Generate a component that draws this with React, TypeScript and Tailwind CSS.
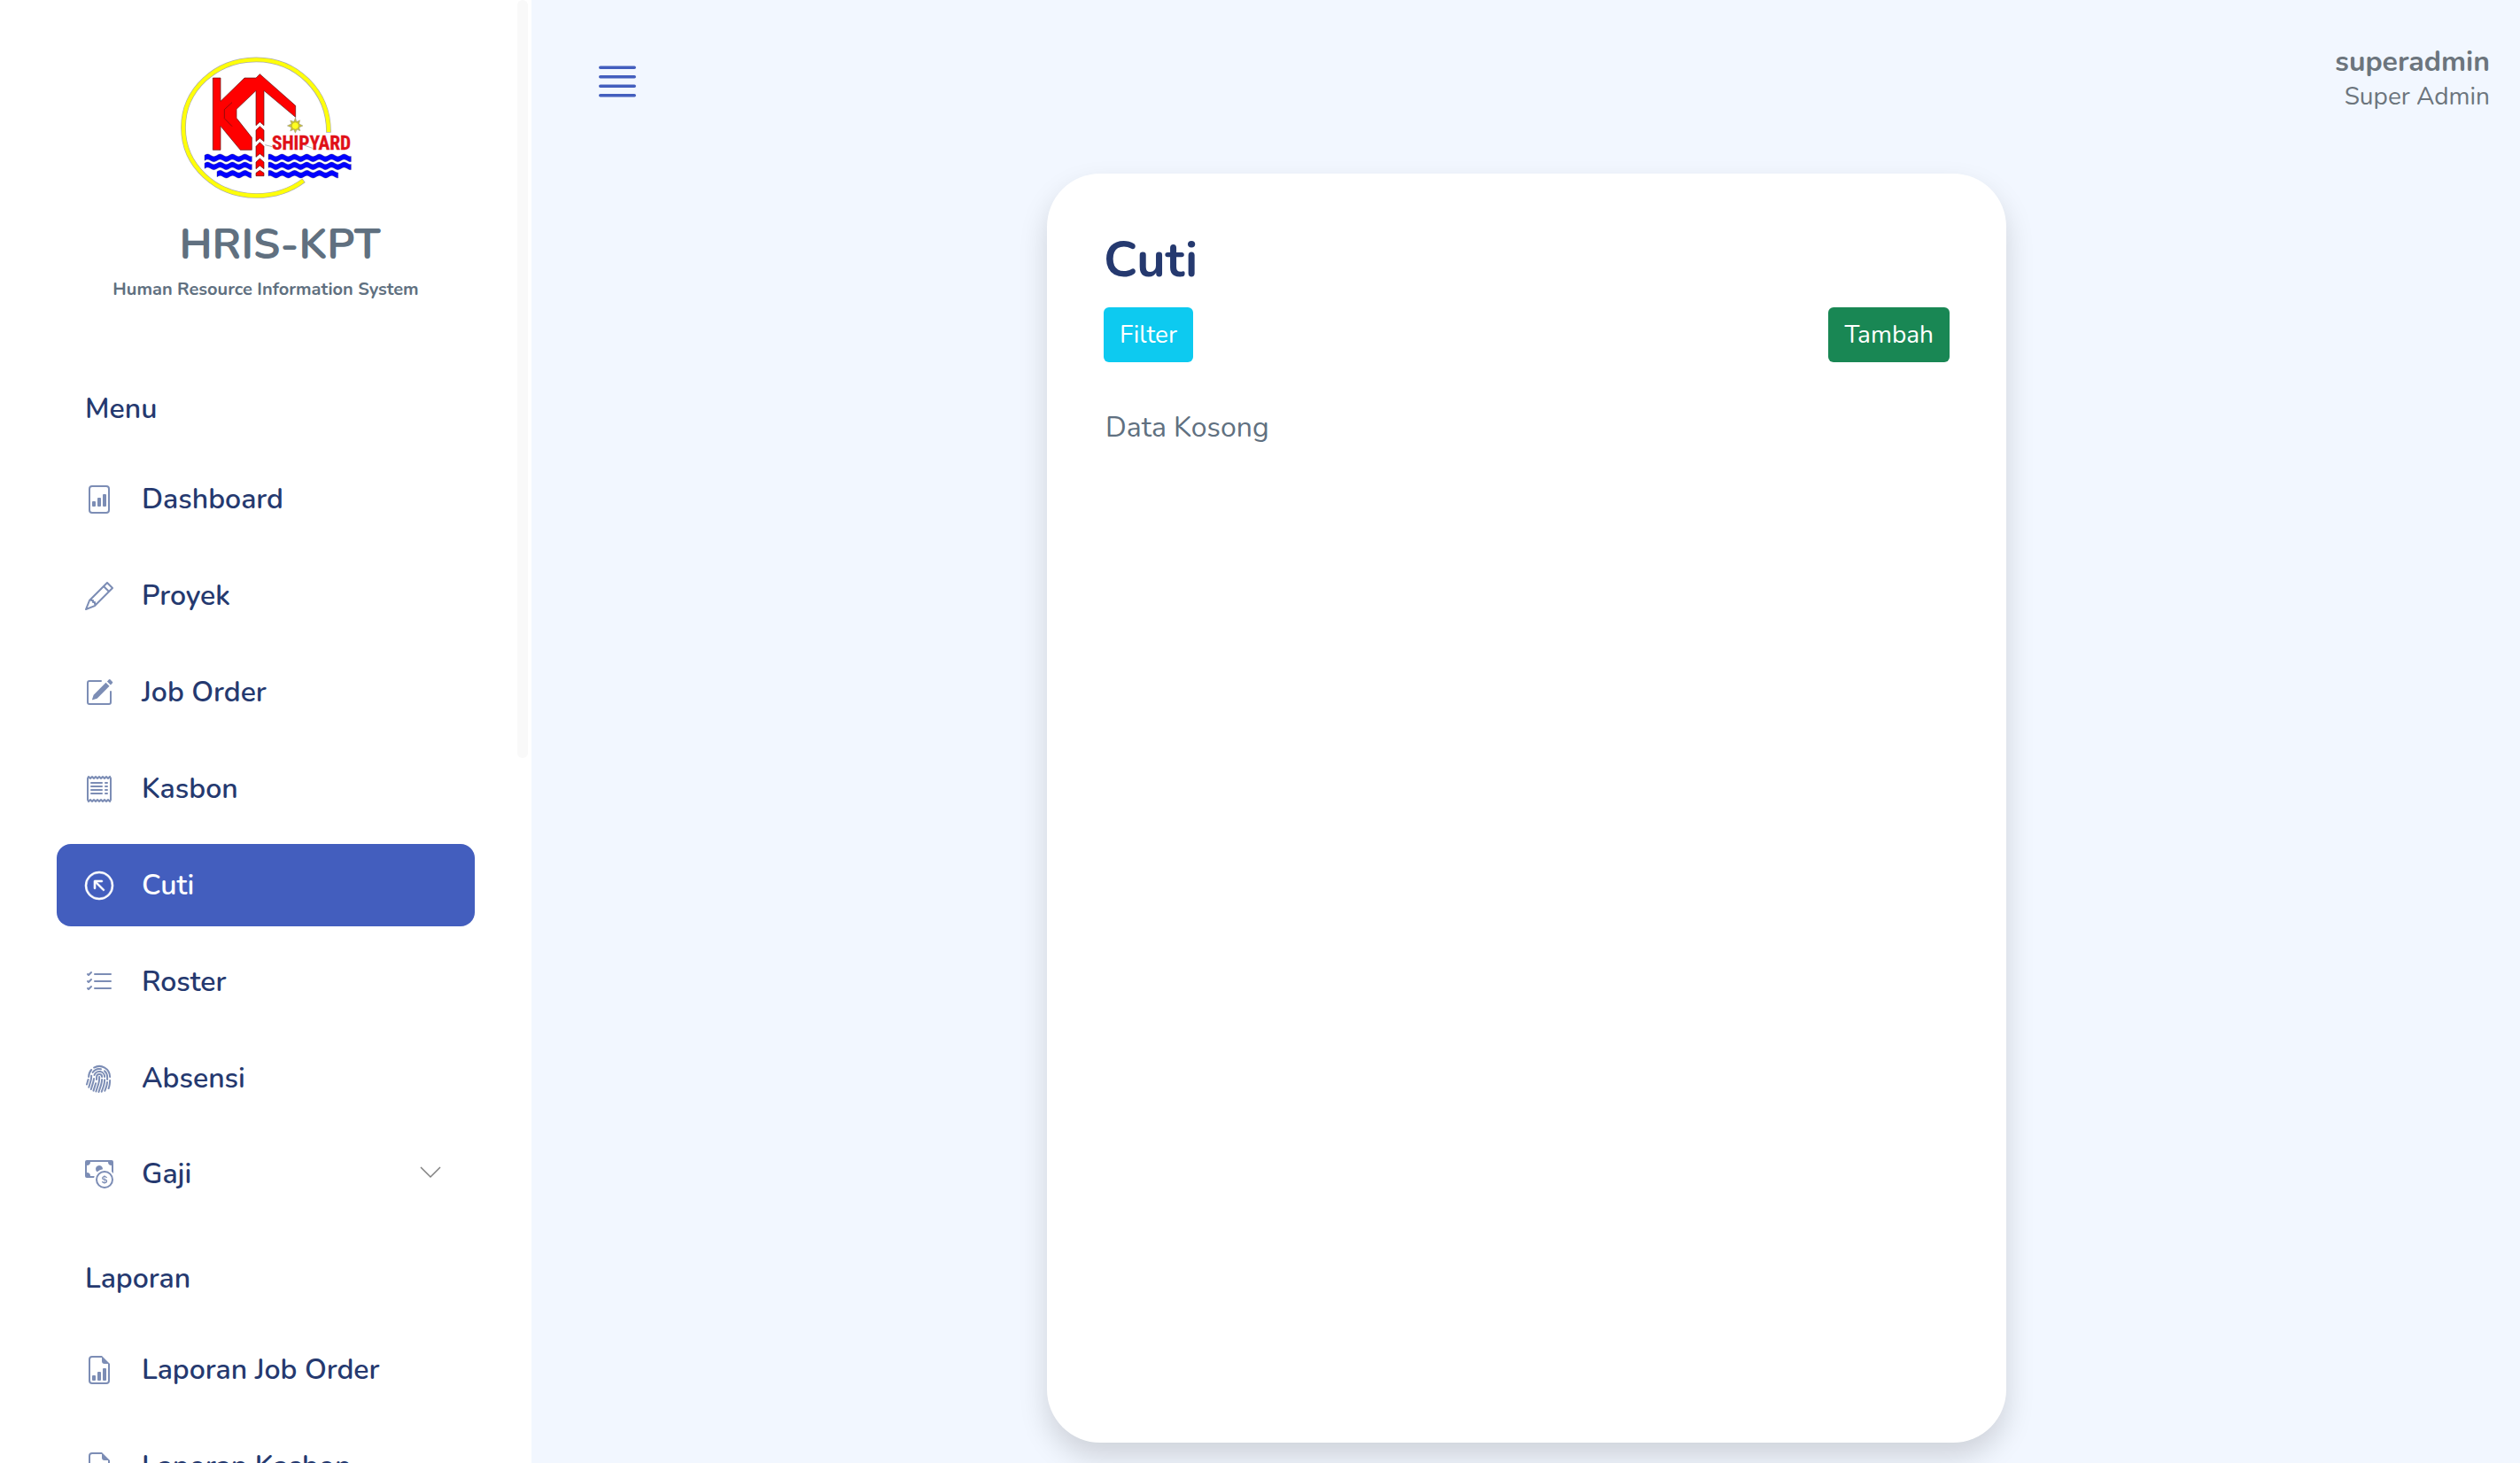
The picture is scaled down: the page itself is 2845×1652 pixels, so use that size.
import type { ReactNode } from "react";
import {
  BsArrowUpLeftCircle,
  BsCashCoin,
  BsFileBarGraph,
  BsFileEarmarkBarGraph,
  BsFingerprint,
  BsJustify,
  BsListCheck,
  BsPencil,
  BsPencilSquare,
  BsReceipt,
} from "react-icons/bs";

function wave(x1: number, x2: number, y: number) {
  const top: string[] = [];
  const bottom: string[] = [];
  for (let x = x1; x <= x2; x += 4) {
    const dy = Math.sin(((x - 153) / 42) * Math.PI * 2) * 4;
    top.push(`${x},${(y + 4 - dy).toFixed(1)}`);
    bottom.unshift(`${x},${(y + 22 - dy).toFixed(1)}`);
  }
  return [...top, ...bottom].join(" ");
}

const waves = [
  wave(153, 313, 372),
  wave(153, 313, 399),
  wave(195, 313, 427),
  wave(369, 649, 372),
  wave(369, 649, 399),
  wave(369, 607, 427),
];

function Logo() {
  return (
    <svg viewBox="0 0 720 570" className="block w-60" role="img" aria-label="KPT Shipyard">
      <path d="M573 299C574 160 465 52 328 52C190 52 81 155 81 282C81 410 190 513 328 513C390 513 447 493 489 461" fill="none" stroke="#aaa" strokeWidth="17" />
      <path d="M573 297C574 160 465 52 328 52C190 52 81 155 81 282C81 410 190 513 328 513C390 513 447 493 487 462" fill="none" stroke="#ffff0a" strokeWidth="13" />
      <g fill="#ff0000" stroke="#5a1010" strokeWidth="2">
        <path d="M181 114H207V193L288 114H327L340 101L461 208V247L354 157V275L340 263L327 275V157L261 220V250L313 316V358H274L207 277V358H181Z" />
        <path d="M246 197L220 221V251L246 278" fill="none" />
        <path d="M327 291L340 278L354 291V329L340 318L327 329Z" />
        <path d="M327 346L340 332L354 346V382L340 371L327 382Z" />
        <path d="M327 399L340 387L354 399V422L340 411L327 422Z" />
        <path d="M327 436L340 427L354 436V446H327Z" />
      </g>
      <path d="M461 247V260M358 341L382 347M490 342L518 352" stroke="#888" strokeWidth="2" />
      <path d="M460 250L465 262L476 257L473 269L486 276L473 282L477 293L466 289L460 301L455 289L443 294L447 282L433 276L447 269L443 258L455 262Z" fill="#c9c040" stroke="#777" strokeWidth="1" />
      <circle cx="460" cy="276" r="12" fill="#ffff20" stroke="#987b10" strokeWidth="1" />
      <g fill="#0000ff" stroke="#222266" strokeWidth="1">
        {waves.map((points) => (
          <polygon key={points} points={points} />
        ))}
      </g>
      <text x="381" y="356" fontSize="64" fontWeight="700" fill="#e01018" stroke="#e01018" strokeWidth="1" fontFamily="'Liberation Sans Narrow', 'Roboto Condensed', 'Open Sans Condensed', sans-serif">
        SHIPYARD
      </text>
    </svg>
  );
}

function NavItem({ icon, label, active = false }: { icon: ReactNode; label: string; active?: boolean }) {
  return (
    <li>
      <a
        href="#"
        aria-current={active ? "page" : undefined}
        className={
          active
            ? "flex h-[93px] items-center gap-8 rounded-2xl bg-[#435ebe] px-8 font-semibold text-white"
            : "flex h-[93px] items-center gap-8 rounded-2xl px-8 font-semibold text-[#25396f]"
        }
      >
        <span className={active ? "text-white" : "text-[#7c8db5]"}>{icon}</span>
        {label}
      </a>
    </li>
  );
}

function Sidebar() {
  return (
    <aside className="relative h-full w-[600px] shrink-0 overflow-hidden bg-white">
      <div className="flex flex-col items-center pt-[50px]">
        <Logo />
        <h1 className="pl-8 text-[48px] leading-[72px] font-bold text-[#607080]">HRIS-KPT</h1>
        <p className="text-[20px] leading-[30px] font-bold text-[#607080]">Human Resource Information System</p>
      </div>
      <nav className="px-16 pt-24 text-[32px] leading-[48px]">
        <h2 className="px-8 font-semibold text-[#25396f]">Menu</h2>
        <ul className="mt-[31px] flex flex-col gap-4">
          <NavItem icon={<BsFileBarGraph size={32} />} label="Dashboard" />
          <NavItem icon={<BsPencil size={32} />} label="Proyek" />
          <NavItem icon={<BsPencilSquare size={32} />} label="Job Order" />
          <NavItem icon={<BsReceipt size={32} />} label="Kasbon" />
          <NavItem icon={<BsArrowUpLeftCircle size={32} stroke="currentColor" strokeWidth={0.3} className="overflow-visible" />} label="Cuti" active />
          <NavItem icon={<BsListCheck size={32} />} label="Roster" />
          <NavItem icon={<BsFingerprint size={32} />} label="Absensi" />
          <li>
            <button type="button" className="flex h-[91px] w-full items-center gap-8 px-8 font-semibold text-[#25396f]">
              <BsCashCoin size={32} className="text-[#7c8db5]" />
              Gaji
              <svg viewBox="0 0 24 18" className="mr-1.5 ml-auto w-6" fill="none" stroke="#808080" strokeWidth="1.5">
                <path d="M1 1L12 12L23 1" />
              </svg>
            </button>
          </li>
        </ul>
        <h2 className="mt-[49px] px-8 font-semibold text-[#25396f]">Laporan</h2>
        <ul className="mt-8 flex flex-col gap-4">
          <NavItem icon={<BsFileEarmarkBarGraph size={32} />} label="Laporan Job Order" />
          <NavItem icon={<BsFileEarmarkBarGraph size={32} />} label="Laporan Kasbon" />
        </ul>
      </nav>
      <div className="absolute top-0 right-1 h-[856px] w-3 rounded-full bg-[#f9f9f9]" />
    </aside>
  );
}

export default function App() {
  return (
    <div className="flex h-screen overflow-hidden bg-[#f2f7ff] font-['Nunito','Lato',sans-serif]">
      <Sidebar />
      <main className="flex min-w-0 flex-1 flex-col pl-0.5">
        <header className="flex h-[196px] shrink-0 items-start justify-between pt-[50px] pr-[34px] pl-[67px]">
          <button type="button" aria-label="Toggle menu" className="mt-3.5 text-[#435ebe]">
            <BsJustify size={56} />
          </button>
          <div className="text-right text-[#6c757d]">
            <p className="text-[32px] leading-[40px] font-bold">superadmin</p>
            <p className="text-[28px] leading-[38px]">Super Admin</p>
          </div>
        </header>
        <section className="mb-[23px] flex w-[1083px] max-w-full flex-1 flex-col self-center rounded-[60px] bg-white p-16 shadow-[0_16px_32px_rgba(0,0,0,0.15)]">
          <h2 className="text-[56px] leading-[67px] font-bold text-[#25396f]">Cuti</h2>
          <div className="mt-5 flex items-center justify-between text-[28px] text-white">
            <button type="button" className="h-[62px] rounded-md bg-[#0dcaf0] px-[18px]">
              Filter
            </button>
            <button type="button" className="h-[62px] rounded-md bg-[#198754] px-[18px]">
              Tambah
            </button>
          </div>
          <p className="mt-[50px] pl-0.5 text-[32px] leading-[48px] text-[#607080]">Data Kosong</p>
        </section>
      </main>
    </div>
  );
}
